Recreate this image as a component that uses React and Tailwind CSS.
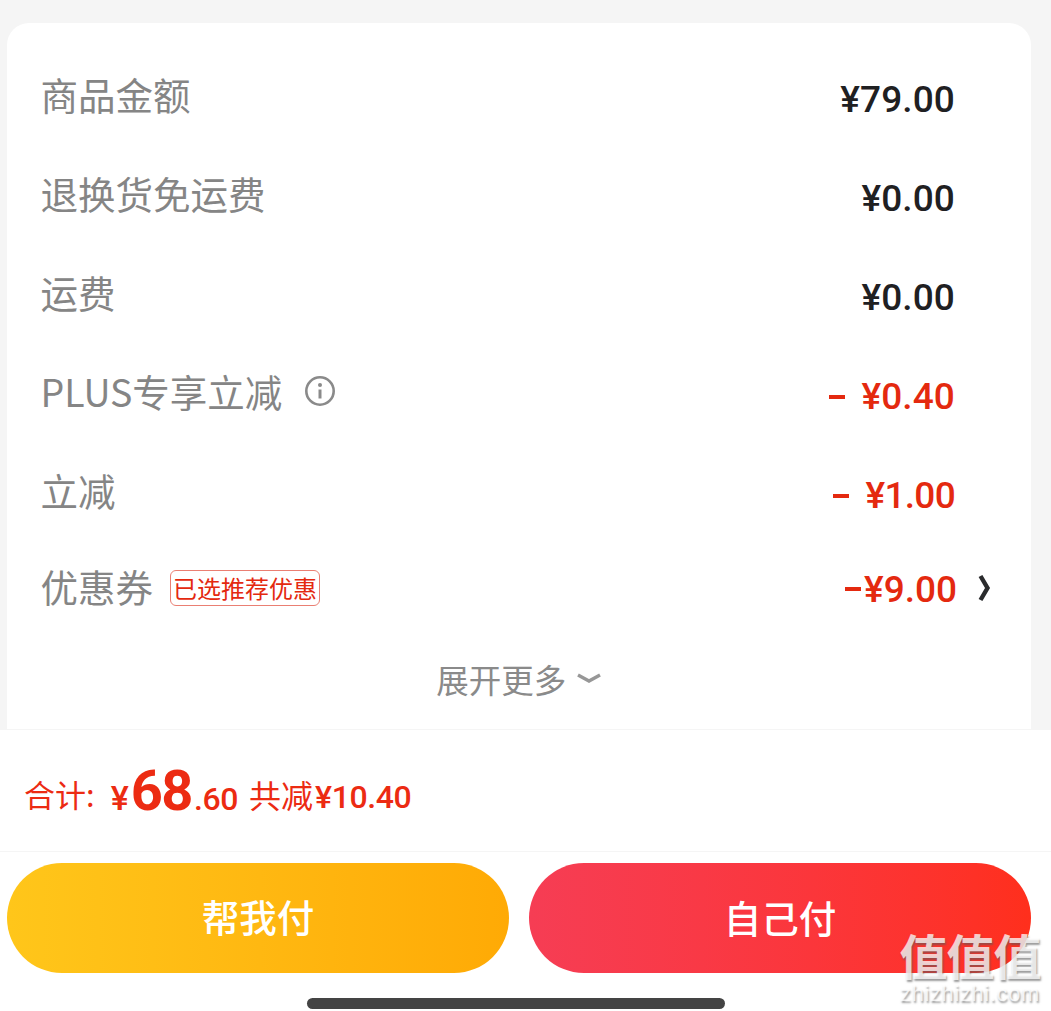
const CJK = "font-['Noto_Sans_CJK_SC',sans-serif]";
const NUM = "font-['Roboto','Noto_Sans_CJK_SC',sans-serif]";

function Dash({ className }) {
  return <span className={`inline-block h-[4px] w-[16px] bg-[#e4290f] align-middle ${className}`} />;
}

function Row({ label, children, value, red, extra, tight }) {
  return (
    <div className="flex h-[99px] items-center justify-between pr-[76px]">
      <div className="mb-[8px] flex items-center">
        <span className="text-[37.5px] leading-none text-[#858585]">{label}</span>
        {extra}
      </div>
      <div
        className={`${NUM} mt-[4px] flex items-center text-[37px] leading-none ${tight ? "tracking-[-0.7px]" : "tracking-[0.1px]"} ${red ? "font-medium text-[#e4290f]" : "font-medium text-[#1f2022]"}`}
      >
        {children}
        {value}
      </div>
    </div>
  );
}

export default function App() {
  return (
    <div className={`${CJK} relative flex h-[1011px] w-[1051px] flex-col overflow-hidden bg-[#f5f5f5]`}>
      <div className="ml-[7px] mr-[20px] mt-[23px] h-[706px] shrink-0 rounded-t-[22px] bg-white pl-[33.5px] pt-[25px]">
        <Row label="商品金额" value="¥79.00" />
        <Row label="退换货免运费" value="¥0.00" />
        <Row label="运费" value="¥0.00" />
        <Row
          label="PLUS专享立减"
          red
          extra={
            <svg className="ml-[22px]" width="32" height="32" viewBox="0 0 32 32" fill="none">
              <circle cx="16" cy="16" r="13.7" stroke="#8a8a8a" strokeWidth="2.6" />
              <circle cx="16" cy="10" r="2" fill="#8a8a8a" />
              <path d="M16 14.5v9" stroke="#8a8a8a" strokeWidth="3" />
            </svg>
          }
        >
          <Dash className="mr-[16px]" />
          ¥0.40
        </Row>
        <Row label="立减" red tight>
          <Dash className="mr-[16px]" />
          ¥1.00
        </Row>
        <div className="-mt-[7px] flex h-[99px] items-center justify-between pr-[40px]">
          <div className="flex items-center">
            <span className="text-[37.5px] leading-none text-[#858585]">优惠券</span>
            <span className="ml-[17px] mt-[4px] flex h-[36px] w-[150px] items-center justify-center rounded-[6px] border border-[#ea7f73] text-[24px] leading-none text-[#e4290f]">
              已选推荐优惠
            </span>
          </div>
          <div className="flex items-center">
            <span className={`${NUM} mt-[7px] flex items-center text-[37px] font-medium leading-none text-[#e4290f]`}>
              <Dash className="mr-[3px]" />
              ¥9.00
            </span>
            <svg className="ml-[20px] mt-[4px]" width="14" height="30" viewBox="0 0 14 30" fill="none">
              <path d="M3.5 3l7 12-7 12" stroke="#2a2b2d" strokeWidth="4.4" />
            </svg>
          </div>
        </div>
        <div className="-mt-[7px] flex h-[86px] items-center justify-center pr-[33px] pt-[16px]">
          <span className="text-[32.5px] leading-none text-[#8a8a8a]">展开更多</span>
          <svg className="ml-[10px]" width="26" height="14" viewBox="0 0 26 14" fill="none">
            <path d="M2 3l11 6 11-6" stroke="#979797" strokeWidth="3.4" />
          </svg>
        </div>
      </div>

      <div className="flex h-[123px] shrink-0 items-center border-y border-[#f5f5f5] bg-white pl-[24px] text-[#ec2b12]">
        <span className="mt-[6px] text-[31px] leading-none">合计:</span>
        <div className={`${NUM} ml-[16px] flex items-baseline font-medium leading-none`}>
          <span className="text-[34px]">¥</span>
          <span className="ml-[2px] text-[56px] font-bold tracking-[-1.5px]">68</span>
          <span className="ml-[2px] text-[32px] tracking-[-0.4px]">.60</span>
        </div>
        <span className="ml-[11px] mt-[6px] text-[32px] leading-none">共减</span>
        <span className={`${NUM} ml-[2px] mt-[12px] text-[32px] font-medium leading-none tracking-[-0.4px]`}>¥10.40</span>
      </div>

      <div className="flex flex-1 flex-col bg-white px-[7px] pt-[11px]">
        <div className="flex gap-[20px]">
          <div className="flex h-[110px] w-[502px] items-center justify-center rounded-full bg-gradient-to-r from-[#ffc61a] to-[#ffaa05] pb-[3px] text-[37.5px] font-medium text-white">
            帮我付
          </div>
          <div className="flex h-[110px] w-[502px] items-center justify-center rounded-full bg-gradient-to-r from-[#f63d54] to-[#ff2f1c] pb-[1px] text-[37.5px] font-medium text-white">
            自己付
          </div>
        </div>
        <div className="ml-[300px] mt-[25px] h-[11px] w-[418px] rounded-full bg-[#444444]" />
      </div>

      <div className="absolute left-[897px] top-[926px] flex w-[146px] flex-col items-center text-white/75 [text-shadow:1px_2px_2px_rgba(90,90,90,0.6)]">
        <span className="text-[48px] font-bold leading-[56px] tracking-[-1px]">值值值</span>
        <span className="font-['Liberation_Sans',sans-serif] text-[22px] leading-[24px] tracking-[0.6px]">zhizhizhi.com</span>
      </div>
    </div>
  );
}
